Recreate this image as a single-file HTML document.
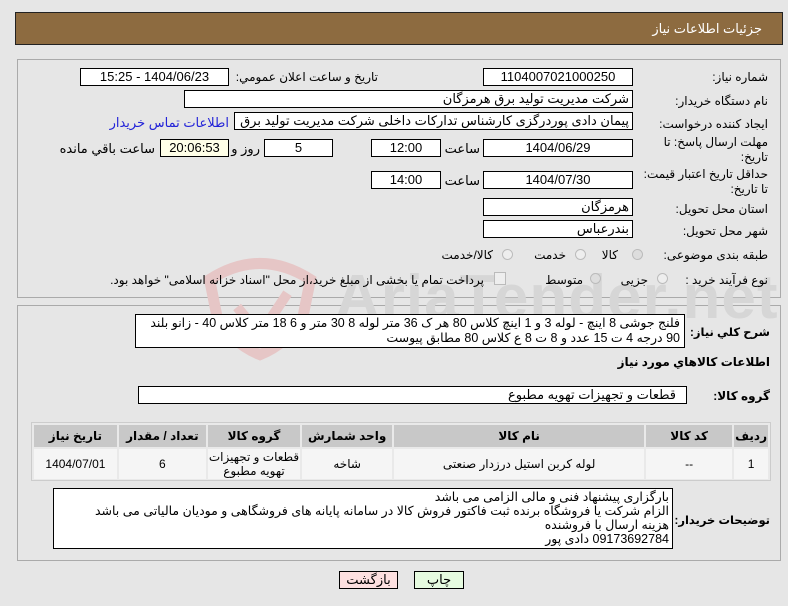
<!DOCTYPE html>
<html><head><meta charset="utf-8"><style>
body{margin:0;width:788px;height:606px;background:#e6e6e6;font-family:"Liberation Sans","DejaVu Sans",sans-serif;font-size:12px;color:#000;position:relative;overflow:hidden}
.a{position:absolute;white-space:nowrap}
.f{position:absolute;background:#fff;border:1px solid #000;box-sizing:border-box;text-align:center;line-height:16px;font-size:13px;direction:rtl}
.l{position:absolute;direction:rtl;white-space:nowrap;font-size:12px}
.b{font-weight:bold}
.r{position:absolute;width:11px;height:11px;border-radius:50%;border:1px solid #bbb;background:#eee;box-sizing:border-box}
table{border-collapse:separate;border-spacing:2px}
td{text-align:center;font-size:12px}
</style></head><body>
<div class="a" style="left:15px;top:12px;width:768px;height:33px;background:#8d6b40;border:1px solid #222;box-sizing:border-box"></div>
<div class="l" style="right:26px;top:21px;color:#fff;font-size:13px">جزئیات اطلاعات نیاز</div>

<div class="a" style="left:17px;top:59px;width:764px;height:239px;border:1px solid #aaa;box-sizing:border-box"></div>
<div class="a" style="left:17px;top:305px;width:764px;height:256px;border:1px solid #aaa;box-sizing:border-box"></div>

<svg class="a" style="left:200px;top:252px" width="120" height="110" viewBox="0 0 130 120"><path d="M10 30 Q65 -5 120 30 L112 70 Q95 100 65 112 Q35 100 18 70 Z" fill="none" stroke="#e6c6c6" stroke-width="12"/><path d="M40 60 L65 90 L95 45" fill="none" stroke="#e6c6c6" stroke-width="11"/></svg>
<div class="a" style="left:335px;top:262px;font-size:62px;font-weight:bold;color:#d6d6d6;letter-spacing:1px">AriaTender.net</div>

<div class="l" style="right:20px;top:70px">شماره نیاز:</div>
<div class="f" style="left:483px;top:68px;width:150px;height:18px">1104007021000250</div>
<div class="l" style="right:410px;top:70px">تاریخ و ساعت اعلان عمومي:</div>
<div class="f" style="left:80px;top:68px;width:149px;height:18px">1404/06/23 - 15:25</div>

<div class="l" style="right:20px;top:94px">نام دستگاه خریدار:</div>
<div class="f" style="left:184px;top:90px;width:449px;height:18px;text-align:right;padding-right:3px">شرکت مدیریت تولید برق هرمزگان</div>

<div class="l" style="right:20px;top:117px">ایجاد کننده درخواست:</div>
<div class="f" style="left:234px;top:112px;width:399px;height:18px;text-align:right;padding-right:3px;overflow:hidden">پیمان دادی پوردرگزی کارشناس تدارکات داخلی شرکت مدیریت تولید برق هرمزگان</div>
<div class="l" style="right:559px;top:115px;color:#2323d8;font-size:13px">اطلاعات تماس خریدار</div>

<div class="l" style="right:20px;top:135px;line-height:15px">مهلت ارسال پاسخ: تا<br>تاریخ:</div>
<div class="f" style="left:483px;top:139px;width:150px;height:18px">1404/06/29</div>
<div class="l" style="right:308px;top:141px;font-size:13px">ساعت</div>
<div class="f" style="left:371px;top:139px;width:70px;height:18px">12:00</div>
<div class="f" style="left:264px;top:139px;width:69px;height:18px">5</div>
<div class="l" style="right:528px;top:141px;font-size:13px">روز و</div>
<div class="f" style="left:160px;top:139px;width:69px;height:18px;background:#ffffe8">20:06:53</div>
<div class="l" style="right:633px;top:141px;font-size:13px">ساعت باقي مانده</div>

<div class="l" style="right:20px;top:167px;line-height:15px">حداقل تاریخ اعتبار قیمت:<br>تا تاریخ:</div>
<div class="f" style="left:483px;top:171px;width:150px;height:18px">1404/07/30</div>
<div class="l" style="right:308px;top:173px;font-size:13px">ساعت</div>
<div class="f" style="left:371px;top:171px;width:70px;height:18px">14:00</div>

<div class="l" style="right:20px;top:202px">استان محل تحویل:</div>
<div class="f" style="left:483px;top:198px;width:150px;height:18px;text-align:right;padding-right:3px">هرمزگان</div>
<div class="l" style="right:20px;top:224px">شهر محل تحویل:</div>
<div class="f" style="left:483px;top:220px;width:150px;height:18px;text-align:right;padding-right:3px">بندرعباس</div>

<div class="l" style="right:20px;top:248px">طبقه بندی موضوعی:</div>
<div class="r" style="left:632px;top:249px;background:#ddd"></div><div class="l" style="right:170px;top:248px">کالا</div>
<div class="r" style="left:575px;top:249px"></div><div class="l" style="right:222px;top:248px">خدمت</div>
<div class="r" style="left:502px;top:249px"></div><div class="l" style="right:295px;top:248px">کالا/خدمت</div>

<div class="l" style="right:20px;top:273px">نوع فرآیند خرید :</div>
<div class="r" style="left:657px;top:273px"></div><div class="l" style="right:140px;top:273px">جزیی</div>
<div class="r" style="left:590px;top:273px;background:#ddd"></div><div class="l" style="right:205px;top:273px">متوسط</div>
<div class="a" style="left:494px;top:272px;width:10px;height:11px;border:1px solid #bbb;background:#eee"></div>
<div class="l" style="right:304px;top:273px">پرداخت تمام یا بخشی از مبلغ خرید،از محل "اسناد خزانه اسلامی" خواهد بود.</div>

<div class="l b" style="right:18px;top:325px;font-size:11.5px">شرح كلي نياز:</div>
<div class="f" style="left:135px;top:314px;width:550px;height:34px;text-align:right;padding:1px 4px;line-height:15px;white-space:normal;font-size:12.5px">فلنج جوشی 8 اینچ - لوله 3 و 1  اینچ کلاس 80 هر ک 36 متر لوله 8 30 متر و 6 18 متر کلاس 40 - زانو بلند 90 درجه 4 ت 15 عدد و 8 ت 8 ع کلاس 80 مطابق پیوست</div>

<div class="l b" style="right:18px;top:355px">اطلاعات كالاهاي مورد نياز</div>
<div class="l b" style="right:18px;top:389px">گروه کالا:</div>
<div class="f" style="left:138px;top:386px;width:549px;height:18px;text-align:right;padding-right:10px">قطعات و تجهیزات تهویه مطبوع</div>

<div class="a" style="left:31px;top:422px;width:740px;height:59px;border:1px solid #ccc;box-sizing:border-box;background:#e9e9e9"></div>
<table class="a" style="left:32px;top:423px;width:738px;direction:rtl">
<tr style="background:#c8c8c8;height:22px;font-weight:bold">
<td style="width:25px">ردیف</td><td style="width:84px">کد کالا</td><td style="width:248px">نام کالا</td><td style="width:88px">واحد شمارش</td><td style="width:88px">گروه کالا</td><td style="width:85px">تعداد / مقدار</td><td>تاریخ نیاز</td></tr>
<tr style="background:#f5f5f5;height:29px"><td>1</td><td>--</td><td>لوله کربن استیل درزدار صنعتی</td><td>شاخه</td><td style="line-height:14px">قطعات و تجهیزات<br>تهویه مطبوع</td><td>6</td><td>1404/07/01</td></tr>
</table>

<div class="l b" style="right:18px;top:513px;font-size:11.5px">توضیحات خریدار:</div>
<div class="f" style="left:53px;top:488px;width:620px;height:61px;text-align:right;padding:1px 3px;line-height:14px;font-size:12.5px;white-space:normal">بارگزاری پیشنهاد فنی و مالی الزامی می باشد<br>الزام شرکت یا فروشگاه برنده ثبت فاکتور فروش کالا در سامانه پایانه های فروشگاهی و مودیان مالیاتی می باشد<br>هزینه ارسال با فروشنده<br>09173692784 دادی پور</div>

<div class="f" style="left:339px;top:571px;width:59px;height:18px;background:#fde0e0">بازگشت</div>
<div class="f" style="left:414px;top:571px;width:50px;height:18px;background:#e6fbe0">چاپ</div>
</body></html>
